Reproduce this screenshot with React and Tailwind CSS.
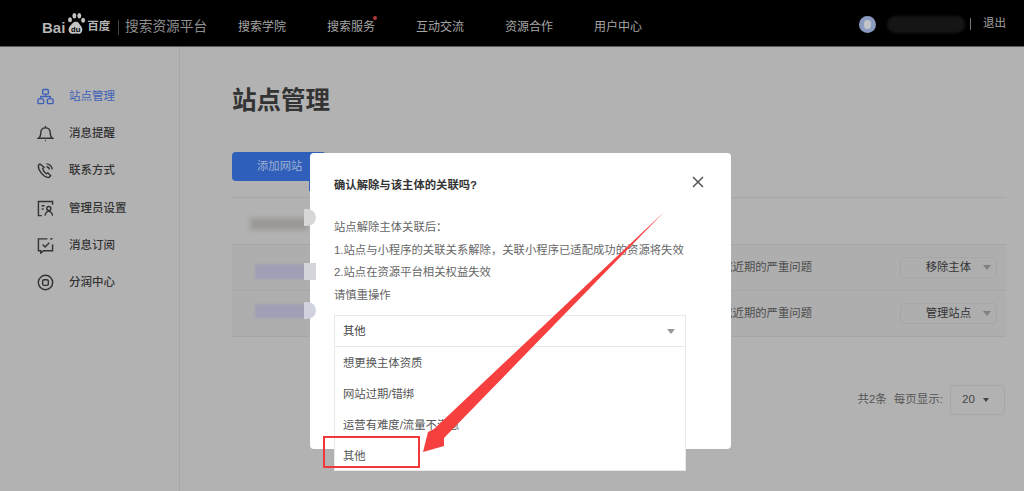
const cjk = { fontFamily: '"Liberation Sans","Noto Sans CJK SC",sans-serif' };

function SideIcon({ i }) {
  const p = { width: 17, height: 17, viewBox: "0 0 18 18", fill: "none", stroke: "currentColor", strokeWidth: 1.5 };
  if (i === 0) return <svg {...p}><rect x="6" y="1.5" width="6" height="5" rx="1" /><rect x="1" y="11.5" width="6" height="5" rx="1" /><rect x="11" y="11.5" width="6" height="5" rx="1" /><path d="M9 6.5V9M4 11.5V9h10v2.500" /></svg>;
  if (i === 1) return <svg {...p}><path d="M1.500 14h15c-1.500-1-2.500-2.500-2.500-5.500C14 5 12 3 9 3S4 5 4 8.500C4 11.500 3 13 1.500 14ZM9 1v2M8.500 16.500h1" /></svg>;
  if (i === 2) return <svg {...p}><path d="M3 2 1.500 3.500C1 8 6 16 12.500 16.500l2-2-3-3-1.500 1C8 11.500 6.500 9 6 7l1.500-1.500Z" /><path d="M10 5a3 3 0 0 1 3 3M10 2a6 6 0 0 1 6 6" /></svg>;
  if (i === 3) return <svg {...p}><path d="M5 16.500H1.500v-15h15V5M5 6h3M5 9.500h2" /><circle cx="12.500" cy="9" r="2.200" /><path d="M8.500 16.500c.5-3 2-4.500 4-4.500s3.500 1.500 4 4.500" /></svg>;
  if (i === 4) return <svg {...p}><path d="M11 2H1.500v12.500H4v2.500l3-2.500h9.500V8" /><path d="m6 8 2.500 2.500L13 6" /><path d="M14 2h2.500" /></svg>;
  return <svg {...p}><circle cx="9" cy="9" r="7.600" /><rect x="6" y="6" width="6" height="6" rx="1.500" /></svg>;
}

const menu = ["站点管理", "消息提醒", "联系方式", "管理员设置", "消息订阅", "分润中心"];
const nav = ["搜索学院", "搜索服务", "互动交流", "资源合作", "用户中心"];

function Caret() {
  return <span className="h-0 w-0 border-x-[4px] border-t-[5px] border-x-transparent border-t-[#808080]" />;
}

function Row({ label }) {
  return (
    <div className="flex h-[46px] items-center justify-end border-b border-[#a6a6a6] bg-[#aeaeae] pr-[9px] text-[11.35px] text-[#4c4c4c]">
      <span className="mr-[88px]">或近期的严重问题</span>
      <span className="flex h-[21px] w-[97px] items-center justify-end gap-[12px] rounded-sm border border-[#a6a6a6] pr-[5px] text-[#333]">
        {label}
        <Caret />
      </span>
    </div>
  );
}

function Logo() {
  return (
    <div className="mt-[8px] flex w-[69px] items-center text-[#b5b5b5]">
      <span className="text-[15px] font-bold leading-none">Bai</span>
      <svg width="22" height="24" viewBox="0 0 20 22" className="-mt-[7px] shrink-0" fill="#c4c4c4">
        <ellipse cx="4.500" cy="7" rx="1.800" ry="2.300" />
        <ellipse cx="8.500" cy="3.500" rx="1.800" ry="2.500" />
        <ellipse cx="13" cy="3.500" rx="1.800" ry="2.500" />
        <ellipse cx="16.500" cy="7.500" rx="1.800" ry="2.300" />
        <path d="M10 9c3 0 3 2.500 5 4.500 2 3 0 7-3 6.500-2-.3-3-.3-4 0C4 20.500 2 17 4 13.500 6 11.500 7 9 10 9Z" />
        <text x="5.500" y="18" fontSize="7" fontWeight="700" fill="#000" fontFamily="Liberation Sans">du</text>
      </svg>
      <span className="whitespace-nowrap text-[11.5px] font-bold leading-none">百度</span>
    </div>
  );
}

function Arrow() {
  return (
    <svg className="pointer-events-none absolute left-0 top-0" width="1024" height="491" viewBox="0 0 1024 491">
      <path d="M664 212 444 438 444 446 423 452 428 432 434 429Z" fill="#f5403f" />
    </svg>
  );
}

export default function App() {
  return (
    <div className="relative h-[491px] w-[1024px] overflow-hidden bg-[#b2b2b2]" style={cjk}>
      <header className="flex h-[47px] items-center border-b border-[#5c5c5c] bg-black pl-[42px]">
        <Logo />
        <span className="ml-[7px] mt-[8px] h-[15px] w-px bg-[#444]" />
        <span className="ml-[6px] mt-[8px] w-[83px] whitespace-nowrap text-[13.7px] text-[#8f8f8f]">搜索资源平台</span>
        <nav className="ml-[30px] mt-[8px] flex gap-[41px] text-xs text-[#a5a5a5]">
          {nav.map((n, i) => (
            <span key={n} className="relative w-[48px] whitespace-nowrap">
              {n}
              {i === 1 && <span className="absolute -right-[2px] -top-[3px] h-[4px] w-[4px] rounded-full bg-[#b33a3a]" />}
            </span>
          ))}
        </nav>
        <div className="ml-auto mt-[2px] flex items-center pr-[18px]">
          <span className="flex h-[17px] w-[17px] items-center justify-center rounded-full bg-[#8b9ac0]">
            <span className="h-[9px] w-[7px] rounded-full bg-[#c2c4c6]" />
          </span>
          <span className="ml-[11px] h-[17px] w-[78px] rounded-full bg-[#151515] blur-[1px]" />
          <span className="ml-[5px] h-[12px] w-px bg-[#777]" />
          <span className="ml-[12px] text-[11.5px] text-[#a0a0a0]">退出</span>
        </div>
      </header>

      <div className="flex h-[444px]">
        <aside className="w-[180px] shrink-0 border-r border-[#a6a6a6] pt-[31px]">
          {menu.map((m, i) => (
            <div key={m} className={`flex h-[37.200px] items-center gap-[15px] pl-[37px] text-[11.5px] ${i === 0 ? "text-[#3f60b8]" : "text-[#333]"}`}>
              <SideIcon i={i} />
              <span className={i === 0 ? "" : "font-medium"}>{m}</span>
            </div>
          ))}
        </aside>

        <main className="flex-1 pl-[52px] pr-[18px]">
          <h1 className="mt-[38px] text-[24.5px] font-bold leading-[32px] text-[#333]">站点管理</h1>
          <button className="mt-[35px] flex h-[29px] w-[94px] items-center rounded-sm bg-[#2f5fbb] pl-[25px] text-[11.35px] text-[#9fb0d0]">添加网站</button>
          <div className="mt-[16px] h-[48px] border-y border-[#a6a6a6]" />
          <div className="-mt-px border-t border-[#a6a6a6]">
            <Row label="移除主体" />
            <Row label="管理站点" />
          </div>
          <div className="mt-[48px] flex items-center justify-end pr-px text-[11.5px] text-[#555]">
            <span>共2条</span>
            <span className="ml-[7px]">每页显示:</span>
            <span className="ml-[7px] flex h-[30px] w-[55px] items-center gap-[8px] rounded-sm border border-[#a6a6a6] pl-[11px] text-[#444]">
              20
              <span className="h-0 w-0 border-x-[3px] border-t-[4px] border-x-transparent border-t-[#444]" />
            </span>
          </div>
        </main>
      </div>

      {/* blurred redactions */}
      <div className="absolute left-[250px] top-[218px] h-[12px] w-[58px] bg-[#9b9a97] blur-[2px]" />
      <div className="absolute left-[255px] top-[264px] h-[15px] w-[50px] bg-[#9fa0b5] blur-[1px]" />
      <div className="absolute left-[255px] top-[304px] h-[14px] w-[50px] bg-[#9fa0b5] blur-[1px]" />
      <div className="absolute left-[309px] top-[177px] h-[14px] w-[2px] bg-[#2f5fbb]" />

      {/* dialog */}
      <div className="absolute left-[310px] top-[153px] h-[296px] w-[421px] rounded-sm bg-white pl-[24px] text-[11.35px] text-[#666]">
        <h2 className="mt-[25px] font-bold leading-[14px] text-[#333]">确认解除与该主体的关联吗?</h2>
        <svg className="absolute left-[382px] top-[23px]" width="12" height="12" viewBox="0 0 12 12" stroke="#555" strokeWidth="1.500">
          <path d="M1 1l10 10M11 1 1 11" />
        </svg>
        <div className="mt-[26px] space-y-[4.700px] leading-[18px]">
          <p className="whitespace-nowrap">站点解除主体关联后：</p>
          <p className="whitespace-nowrap">1.站点与小程序的关联关系解除，关联小程序已适配成功的资源将失效</p>
          <p className="whitespace-nowrap">2.站点在资源平台相关权益失效</p>
          <p className="whitespace-nowrap">请慎重操作</p>
        </div>
        <div className="absolute left-[24px] top-[162px] w-[352px] border border-[#e8e8e8] bg-white text-[#555]">
          <div className="flex h-[31px] items-center justify-between border-b border-[#e8e8e8] pl-[8px] pr-[10px] pt-px text-[#444]">
            其他
            <span className="h-0 w-0 border-x-[4px] border-t-[5px] border-x-transparent border-t-[#999]" />
          </div>
          {["想更换主体资质", "网站过期/错绑", "运营有难度/流量不满意"].map((o) => (
            <div key={o} className="flex h-[31px] items-center pl-[8px] pt-[2px]">{o}</div>
          ))}
          <div className="flex h-[30px] items-center pl-[8px] pt-[3px]">其他</div>
        </div>
      </div>

      <span className="absolute left-[304px] top-[209px] h-[17px] w-[12px] rounded-r-full bg-[#d7d7d7]" />
      <span className="absolute left-[304px] top-[263px] h-[17px] w-[12px] bg-[#d5d6db]" />
      <span className="absolute left-[304px] top-[302px] h-[17px] w-[12px] rounded-r-full bg-[#d0d2dd]" />

      {/* screenshot annotations */}
      <div className="absolute left-[323px] top-[436px] h-[32px] w-[97px] border-2 border-[#f0373a]" />
      <Arrow />
    </div>
  );
}
